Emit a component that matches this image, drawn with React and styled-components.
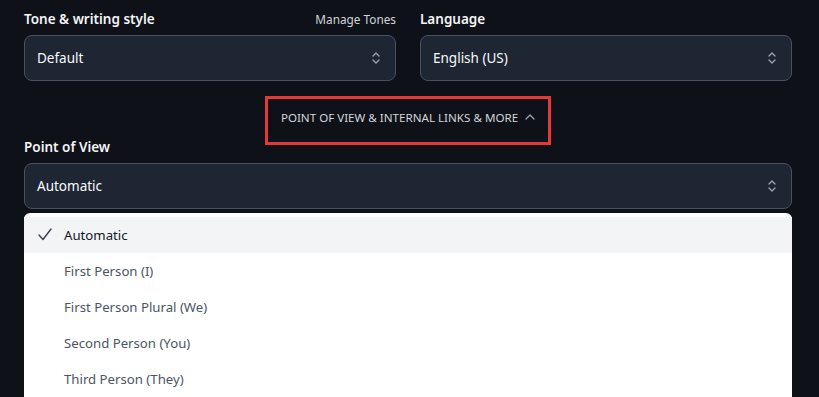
import React from "react";
import styled, { createGlobalStyle } from "styled-components";

const GlobalStyle = createGlobalStyle`
  html, body {
    margin: 0;
    padding: 0;
    background: #0e1118;
    font-family: "Noto Sans", "Open Sans", sans-serif;
    -webkit-font-smoothing: antialiased;
  }
`;

const Page = styled.div`
  padding: 9px 27px 0 24px;
  height: 397px;
  box-sizing: border-box;
  overflow: hidden;
`;

const Grid = styled.div`
  display: grid;
  grid-template-columns: 1fr 1fr;
  column-gap: 24px;
`;

const Field = styled.div`
  display: flex;
  flex-direction: column;
`;

const LabelRow = styled.div`
  display: flex;
  justify-content: space-between;
  align-items: center;
  height: 20px;
  margin-bottom: 6px;
  margin-top: ${(p) => p.$top || 0}px;
`;

const Label = styled.span`
  color: #f3f4f6;
  font-size: 13.5px;
  font-weight: 600;
`;

const SideLink = styled.span`
  color: #d1d5db;
  font-size: 11.8px;
`;

const Select = styled.div`
  height: 46px;
  box-sizing: border-box;
  border: 1px solid #4a5160;
  border-radius: 8px;
  background: #1e2633;
  display: flex;
  align-items: center;
  justify-content: space-between;
  padding: 0 14px 0 12px;
  color: #f9fafb;
  font-size: 13.5px;
`;

const ToggleWrap = styled.div`
  display: flex;
  justify-content: center;
  margin-top: 24px;
`;

const Toggle = styled.button`
  position: relative;
  display: inline-flex;
  align-items: center;
  gap: 7px;
  height: 24px;
  padding: 0 13px;
  background: none;
  border: none;
  color: #d1d5db;
  font-family: inherit;
  font-size: 11.6px;
  text-transform: uppercase;
  cursor: pointer;
`;

const Highlight = styled.span`
  position: absolute;
  top: -9px;
  bottom: -16px;
  left: -3px;
  right: -3px;
  border: 3px solid #e5383b;
  pointer-events: none;
`;

const Menu = styled.ul`
  list-style: none;
  margin: 4px 0 0;
  padding: 4px 0 0;
  background: #ffffff;
  border-radius: 6px 6px 0 0;
`;

const Item = styled.li`
  position: relative;
  height: 36px;
  display: flex;
  align-items: center;
  padding-left: 40px;
  font-size: 13.2px;
  color: ${(p) => (p.$selected ? "#111827" : "#4b5563")};
  background: ${(p) => (p.$selected ? "#f3f4f6" : "transparent")};
`;

const Check = styled.span`
  position: absolute;
  left: 14px;
  top: 11px;
  display: flex;
`;

const UpDown = () => (
  <svg width="10" height="14" viewBox="0 0 10 14" fill="none" stroke="#9ca3af" strokeWidth="1.4" strokeLinecap="round" strokeLinejoin="round">
    <path d="M2 5 L5 2 L8 5" />
    <path d="M2 9 L5 12 L8 9" />
  </svg>
);

const ChevronUp = () => (
  <svg width="10" height="6" viewBox="0 0 10 6" fill="none" stroke="#9ca3af" strokeWidth="1.3" strokeLinecap="round" strokeLinejoin="round">
    <path d="M1 5 L5 1 L9 5" />
  </svg>
);

const CheckIcon = () => (
  <svg width="14" height="13" viewBox="0 0 14 13" fill="none" stroke="#374151" strokeWidth="1.4" strokeLinecap="round" strokeLinejoin="round">
    <path d="M1 7 L5 11.5 L13 1" />
  </svg>
);

const options = [
  "Automatic",
  "First Person (I)",
  "First Person Plural (We)",
  "Second Person (You)",
  "Third Person (They)",
];

export default function App() {
  const selected = "Automatic";
  return (
    <>
      <GlobalStyle />
      <Page>
        <Grid>
          <Field>
            <LabelRow>
              <Label>Tone &amp; writing style</Label>
              <SideLink>Manage Tones</SideLink>
            </LabelRow>
            <Select>
              Default
              <UpDown />
            </Select>
          </Field>
          <Field>
            <LabelRow>
              <Label>Language</Label>
            </LabelRow>
            <Select>
              English (US)
              <UpDown />
            </Select>
          </Field>
        </Grid>

        <ToggleWrap>
          <Toggle>
            Point of view &amp; internal links &amp; more
            <ChevronUp />
            <Highlight />
          </Toggle>
        </ToggleWrap>

        <Field>
          <LabelRow $top={8}>
            <Label>Point of View</Label>
          </LabelRow>
          <Select>
            Automatic
            <UpDown />
          </Select>
        </Field>

        <Menu>
          {options.map((o) => (
            <Item key={o} $selected={o === selected}>
              {o === selected && (
                <Check>
                  <CheckIcon />
                </Check>
              )}
              {o}
            </Item>
          ))}
        </Menu>
      </Page>
    </>
  );
}
